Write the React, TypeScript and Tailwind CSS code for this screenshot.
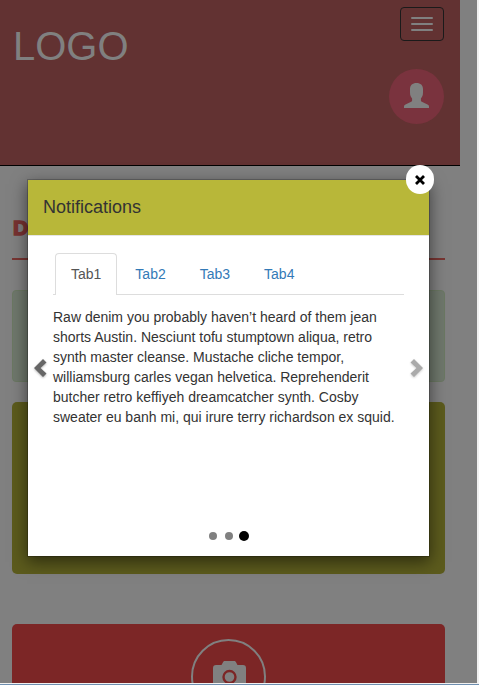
import React from "react";

const tabs = ["Tab1", "Tab2", "Tab3", "Tab4"];

const lines = [
  "Raw denim you probably haven’t heard of them jean",
  "shorts Austin. Nesciunt tofu stumptown aliqua, retro",
  "synth master cleanse. Mustache cliche tempor,",
  "williamsburg carles vegan helvetica. Reprehenderit",
  "butcher retro keffiyeh dreamcatcher synth. Cosby",
  "sweater eu banh mi, qui irure terry richardson ex squid.",
];

function Header() {
  return (
    <header className="flex h-[166px] w-[460px] justify-between border-b border-black bg-[#623232] pl-[13px] pr-4">
      <div className="pt-[23px] text-[40px] leading-[46px] text-[#808080]">LOGO</div>
      <div className="flex flex-col items-end pt-[7px]">
        <button className="flex h-[34px] w-11 flex-col items-center justify-center gap-1 rounded border border-[#1a1a1a]">
          <span className="h-0.5 w-[22px] rounded-[1px] bg-[#808080]" />
          <span className="h-0.5 w-[22px] rounded-[1px] bg-[#808080]" />
          <span className="h-0.5 w-[22px] rounded-[1px] bg-[#808080]" />
        </button>
        <div className="mt-7 flex size-[55px] justify-center rounded-full bg-[#7a333e] pt-[14px]">
          <svg width="25" height="25" viewBox="0 0 25 25" fill="#808080">
            <path d="M12.5 0C8.500 0 6 2.200 6 6v3.500c0 2.700.8 4.600 2.100 6v2c0 .7-.3 1-.9 1.300L1.500 21.500C.5 22 0 22.600 0 23.500V25h25v-1.500c0-.9-.5-1.500-1.500-2l-5.700-2.700c-.6-.3-.9-.6-.9-1.300v-2c1.300-1.400 2.100-3.300 2.100-6V6c0-3.800-2.500-6-6.500-6z" />
          </svg>
        </div>
      </div>
    </header>
  );
}

function Page() {
  return (
    <div className="h-[683px] w-[477px] overflow-hidden bg-[#808080]">
      <Header />
      <main className="ml-3 w-[433px]">
        <h2 className="h-[94px] border-b-2 border-[#783532] pl-px pt-[49px] text-[21px] font-black leading-[26px] text-[#783231] [-webkit-text-stroke:1.500px_#783231]">
          D
        </h2>
        <div className="mt-[30px] h-[92px] rounded border border-[#6b7863] bg-[#6f786c]" />
        <div className="mt-5 h-[172px] rounded-[5px] bg-[#5c5b1d]" />
        <div className="mt-[50px] flex h-[172px] justify-center rounded-[5px] bg-[#7c2626] pt-[15px]">
          <div className="flex size-[75px] justify-center rounded-full border-2 border-[#808080] pl-px pt-5">
            <svg width="33" height="29" viewBox="0 0 33 29">
              <path
                fill="#808080"
                d="M3 4h5.500L10 1.200C10.400.4 11 0 12 0h9c1 0 1.600.4 2 1.200L24.500 4H30c2 0 3 1.200 3 3v19c0 2-1 3-3 3H3c-2 0-3-1-3-3V7c0-1.800 1-3 3-3z"
              />
              <circle cx="16.500" cy="16" r="6" fill="none" stroke="#7c2626" strokeWidth="2.400" />
            </svg>
          </div>
        </div>
      </main>
    </div>
  );
}

function Modal() {
  return (
    <div className="absolute left-[27px] top-[179px] flex h-[378px] w-[403px] flex-col border border-black/20 bg-white bg-clip-padding shadow-[0_5px_15px_rgba(0,0,0,0.5)]">
      <div className="h-14 border-b border-[#e5e5e5] bg-[#b8b739] pl-[15px] pt-[15px] text-[18px] leading-[25px] text-[#333]">
        Notifications
      </div>
      <div className="flex-1 pl-[25px] pr-[25px] pt-[17px] text-sm">
        <nav className="flex h-[42px] gap-0.5 border-b border-[#ddd] pl-0.5">
          {tabs.map((tab, i) => (
            <a
              key={tab}
              className={
                i === 0
                  ? "h-[42px] rounded-t border border-b-0 border-[#ddd] bg-white px-[15px] pt-[10px] leading-5 text-[#555]"
                  : "h-[42px] border border-transparent px-[15px] pt-[10px] leading-5 text-[#337ab7]"
              }
            >
              {tab}
            </a>
          ))}
        </nav>
        <div className="mt-3 leading-5 text-[#333]">
          {lines.map((line) => (
            <p key={line} className="whitespace-nowrap">
              {line}
            </p>
          ))}
        </div>
      </div>
      <div className="flex h-10 items-center justify-center gap-2">
        <span className="size-2 rounded-full bg-[#808080]" />
        <span className="size-2 rounded-full bg-[#808080]" />
        <span className="-ml-0.5 size-[10px] rounded-full bg-black" />
      </div>
      <button className="absolute -top-[15px] left-[378px] flex h-[29px] w-7 items-center justify-center rounded-full bg-white">
        <svg width="10" height="10" viewBox="0 0 10 10" stroke="#000" strokeWidth="2.800" fill="none" className="mt-px">
          <path d="M1 1l8 8M9 1l-8 8" />
        </svg>
      </button>
      <svg className="absolute left-[5px] top-[178px] drop-shadow-[0_1px_1px_rgba(0,0,0,0.3)]" width="15" height="20" viewBox="0 0 15 20" fill="#666">
        <path d="M10 1l3.500 3.500L7.500 10l6 5.500L10 19 1 10z" />
      </svg>
      <svg className="absolute left-[381px] top-[178px] drop-shadow-[0_1px_1px_rgba(0,0,0,0.2)]" width="15" height="20" viewBox="0 0 15 20" fill="#aaa">
        <path d="M5 1L1.500 4.500l6 5.500-6 5.500L5 19l9-9z" />
      </svg>
    </div>
  );
}

export default function App() {
  return (
    <div className="relative h-[685px] w-[479px] overflow-hidden border-b border-[#6f8fb0] bg-[#f0f0f0] font-['Liberation_Sans',Arial,sans-serif]">
      <Page />
      <Modal />
    </div>
  );
}
